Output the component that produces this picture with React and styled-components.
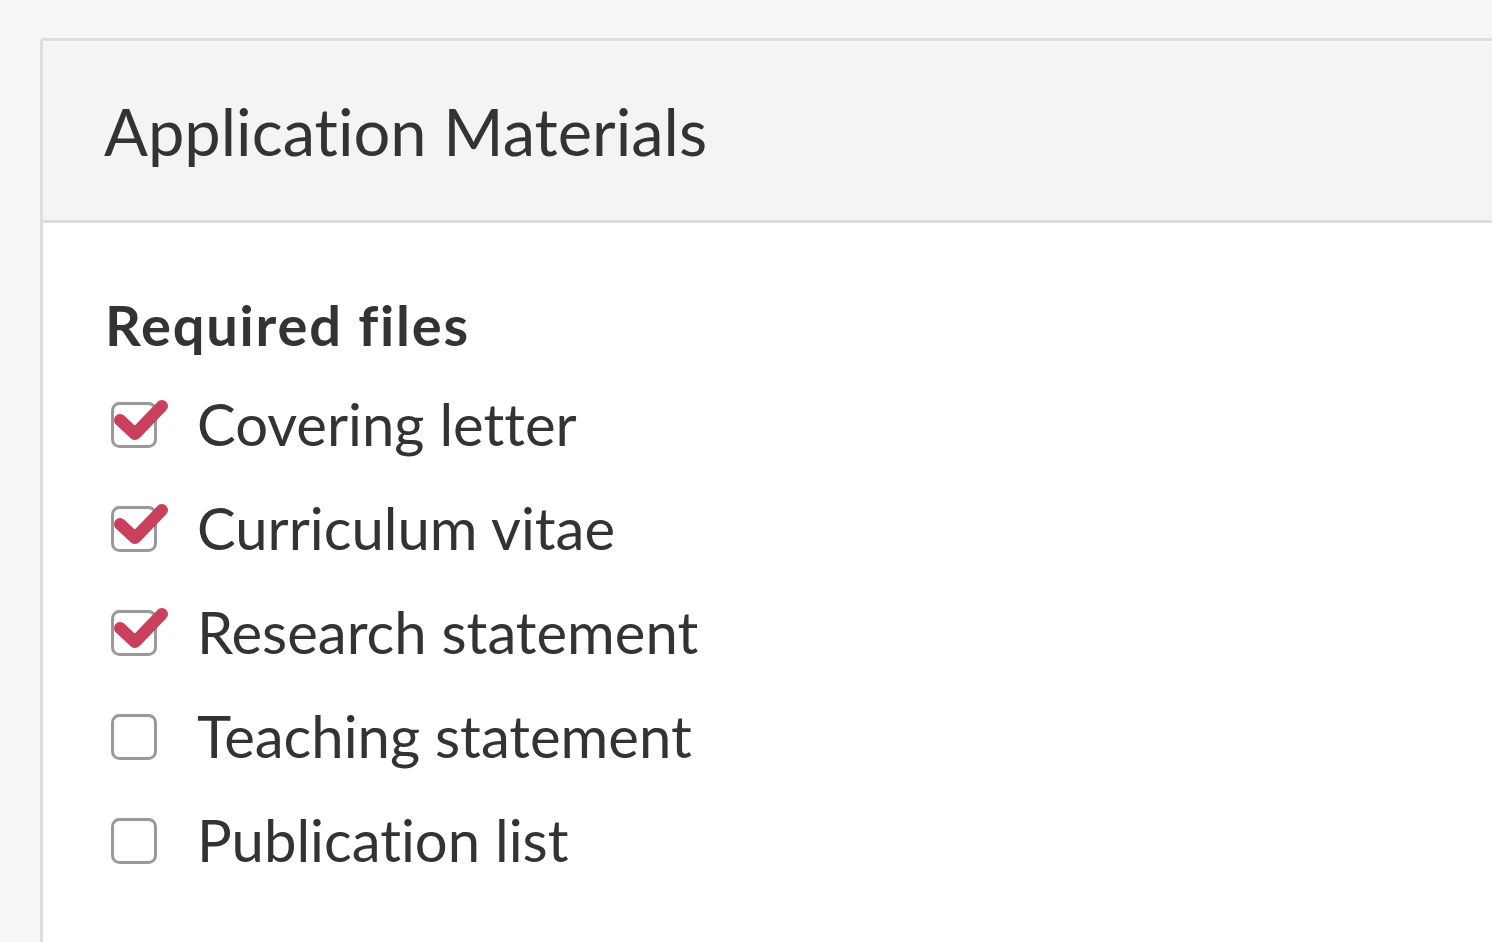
import React from "react";
import styled, { createGlobalStyle } from "styled-components";

const Global = createGlobalStyle`
  html, body { margin: 0; padding: 0; height: 100%; overflow: hidden; }
  body {
    background: #f6f6f6;
    font-family: Lato, "Open Sans", sans-serif;
    font-variant-ligatures: none;
    font-feature-settings: "liga" 0, "clig" 0;
    color: #333;
  }
`;

const Page = styled.div`
  padding: 38px 0 0 40px;
  height: 942px;
  box-sizing: border-box;
  overflow: hidden;
`;

const Card = styled.section`
  height: 100%;
  background: #fff;
  border: 3px solid #dddddd;
  border-right: none;
  border-bottom: none;
  border-radius: 4px 0 0 0;
  box-sizing: border-box;
`;

const Header = styled.header`
  height: 182px;
  background: #f4f4f4;
  border-bottom: 3px solid #dddddd;
  box-sizing: border-box;
  display: flex;
  align-items: center;
  padding-left: 61px;
  border-radius: 3px 0 0 0;
`;

const Title = styled.h1`
  margin: 0;
  font-weight: 400;
  font-size: 65px;
  color: #333;
`;

const Body = styled.div`
  padding: 72px 0 0 62px;
`;

const SectionTitle = styled.h2`
  margin: 0 0 36px;
  font-size: 56px;
  font-weight: 700;
  line-height: 60px;
  letter-spacing: 1.8px;
  color: #333;
`;

const List = styled.ul`
  list-style: none;
  margin: 0;
  padding: 0;
  display: flex;
  flex-direction: column;
  gap: 40px;
`;

const Item = styled.li`
  display: flex;
  align-items: center;
  gap: 29px;
  height: 64px;
  font-size: 58px;
  color: #333;
`;

const Box = styled.svg`
  flex: none;
  margin-left: 3px;
`;

function CheckBox({ checked }) {
  return (
    <Box width="60" height="56" viewBox="0 0 60 56">
      <rect x="4.5" y="8.5" width="43" height="43" rx="7" fill="#fff" stroke="#999" strokeWidth="3" />
      {checked && (
        <polyline
          points="12,25 27,39 54,11"
          fill="none"
          stroke="#c8405b"
          strokeWidth="12"
          strokeLinecap="round"
          strokeLinejoin="round"
        />
      )}
    </Box>
  );
}

const items = [
  ["Covering letter", true],
  ["Curriculum vitae", true],
  ["Research statement", true],
  ["Teaching statement", false],
  ["Publication list", false],
];

export default function App() {
  return (
    <>
      <Global />
      <Page>
        <Card>
          <Header>
            <Title>Application Materials</Title>
          </Header>
          <Body>
            <SectionTitle>Required files</SectionTitle>
            <List>
              {items.map(([label, checked]) => (
                <Item key={label}>
                  <CheckBox checked={checked} />
                  <span>{label}</span>
                </Item>
              ))}
            </List>
          </Body>
        </Card>
      </Page>
    </>
  );
}
